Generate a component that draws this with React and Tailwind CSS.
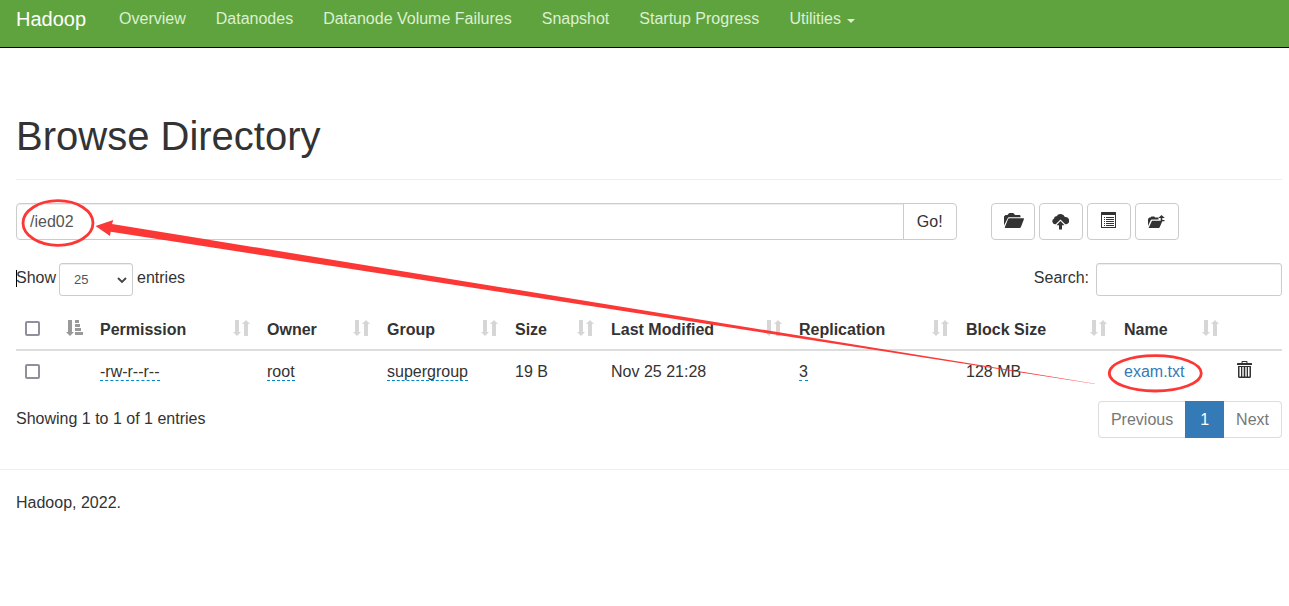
import { useState } from "react";

const navLinks = ["Overview", "Datanodes", "Datanode Volume Failures", "Snapshot", "Startup Progress"];

const columns = [
  { title: "Permission", width: "w-[167px]" },
  { title: "Owner", width: "w-[120px]" },
  { title: "Group", width: "w-[128px]" },
  { title: "Size", width: "w-[96px]" },
  { title: "Last Modified", width: "w-[188px]" },
  { title: "Replication", width: "w-[167px]" },
  { title: "Block Size", width: "w-[158px]" },
  { title: "Name", width: "w-[112px]" }
];

const files = [
  {
    permission: "-rw-r--r--",
    owner: "root",
    group: "supergroup",
    size: "19 B",
    modified: "Nov 25 21:28",
    replication: "3",
    blockSize: "128 MB",
    name: "exam.txt"
  }
];

const checkboxClass =
  "block size-[15px] appearance-none rounded-[2px] border-2 border-[#8f8f9d] bg-white checked:bg-[#337ab7]";

function SortIcon() {
  return (
    <svg className="mb-[2px]" width="17" height="16" viewBox="0 0 17 16" fill="#d6d6d6" aria-hidden="true">
      <path d="M2 0h4v12h2l-4 4-4-4h2z" />
      <path d="M11 16h4V4h2l-4-4-4 4h2z" />
    </svg>
  );
}

function SortAscIcon() {
  return (
    <svg className="mb-[2px]" width="17" height="16" viewBox="0 0 17 16" fill="#999" aria-hidden="true">
      <path d="M2 0h4v12h2l-4 4-4-4h2z" />
      <path d="M9 0h4v3H9zM9 4h5v3H9zM9 8h6v3H9zM9 12h8v3H9z" />
    </svg>
  );
}

function FolderOpenIcon() {
  return (
    <svg className="mb-[2px] ml-[3px]" width="20" height="15" viewBox="0 0 20 15" fill="#333" aria-hidden="true">
      <path d="M0 12.500V3.500L1.500 2H3.500L4.700.5Q5.100 0 5.800 0H8.800Q9.500 0 9.900.5L11 2H15.500Q16.500 2 16.500 3.300V4.300H4.800Q4.100 4.300 3.800 5Z" />
      <path d="M5.200 5.300H19.500Q20.200 5.300 19.900 6.200L16.900 14Q16.500 15 15.600 15H1.300Q.5 15 .9 14L4 6.200Q4.400 5.300 5.200 5.300Z" />
    </svg>
  );
}

function CloudUploadIcon() {
  return (
    <svg width="17" height="17" viewBox="0 0 17 17" fill="#333" aria-hidden="true">
      <path d="M2.900 11.200A2.900 2.900 0 0 1 2.200 5.600A2.100 2.100 0 0 1 4.600 3.200A4.600 4.600 0 0 1 12.900 4.100A3.600 3.600 0 0 1 14.200 11.200H13.300L8.500 6.400L3.700 11.200Z" />
      <path d="M8.500 8L12.500 12.200H10V16.500H7V12.200H4.500Z" />
    </svg>
  );
}

function ListIcon() {
  return (
    <svg className="mb-[3px]" width="15" height="16" viewBox="0 0 15 16" fill="#333" aria-hidden="true">
      <path fillRule="evenodd" d="M.5 0H14.500Q15 0 15 .5V15.500Q15 16 14.500 16H.5Q0 16 0 15.500V.5Q0 0 .5 0ZM1 3V15H14V3Z" />
      <path d="M3 5h1v1H3zM5 5h8v1H5zM3 7h1v1H3zM5 7h8v1H5zM3 9h1v1H3zM5 9h8v1H5zM3 11h1v1H3zM5 11h8v1H5zM3 13h1v1H3zM5 13h8v1H5z" />
    </svg>
  );
}

function FolderMoveIcon() {
  return (
    <svg width="17" height="13" viewBox="0 0 17 13" fill="#333" aria-hidden="true">
      <path d="M0 11V4L1.300 2.500H2.500L3.400 1.400H6.200L7.200 2.500H10.500V4.500H3.600L2.800 5.100Z" />
      <path d="M4 5.800H14.500L11.700 12.300Q11.400 13 10.700 13H.6Z" />
      <path d="M13.500 0L16.800 3H14.300V5H16.500V6.200H12.700V3H10.300Z" />
    </svg>
  );
}

function TrashIcon() {
  return (
    <svg width="15" height="17" viewBox="0 0 15 17" fill="#333" aria-hidden="true">
      <path fillRule="evenodd" d="M4.500 2V1Q4.500 0 5.500 0H9.500Q10.500 0 10.500 1V2H14.500Q15 2 15 2.500V4H0V2.500Q0 2 .5 2ZM5.600 1.100V2H9.400V1.100Z" />
      <path fillRule="evenodd" d="M1 5H14V15.500Q14 17 12.500 17H2.500Q1 17 1 15.500ZM2.500 6V15.500H4V6ZM5.300 6V15.500H6.700V6ZM8.300 6V15.500H9.700V6ZM11 6V15.500H12.500V6Z" />
    </svg>
  );
}

function Annotations() {
  return (
    <svg
      className="pointer-events-none absolute top-0 left-0"
      width="1289"
      height="606"
      viewBox="0 0 1289 606"
      fill="none"
      aria-hidden="true"
    >
      <ellipse cx="58" cy="223" rx="35" ry="22.300" stroke="#fb3836" strokeWidth="2.800" />
      <ellipse cx="1155.300" cy="373.300" rx="46" ry="17.700" stroke="#fb3836" strokeWidth="2.800" />
      <path d="M95.500 226L113.300 220L112 224L1095 383.700V384L110.700 231.800L110 236Z" fill="#fb3836" />
    </svg>
  );
}

const actions = [
  { label: "Create directory", Icon: FolderOpenIcon },
  { label: "Upload files", Icon: CloudUploadIcon },
  { label: "Cut & paste", Icon: ListIcon },
  { label: "Parent directory", Icon: FolderMoveIcon }
];

function Editable({ children }) {
  return (
    <button type="button" className="border-b border-dashed border-b-[#0088cc] leading-[16px]">
      {children}
    </button>
  );
}

export default function App() {
  const [path, setPath] = useState("/ied02");
  const [pageSize, setPageSize] = useState("25");
  const [search, setSearch] = useState("");

  const rows = files.filter((file) => file.name.includes(search));

  return (
    <div className="relative min-h-screen overflow-x-hidden bg-white font-['Liberation_Sans',Arial,sans-serif] text-[16px] leading-[22px] text-[#333]">
      <header className="border-b border-black bg-[#5fa33e]">
        <nav className="flex h-[47px] items-start px-4 pt-2">
          <a href="#" className="mr-[18px] text-[20px] text-white">Hadoop</a>
          <ul className="flex text-[#dcf0d3]">
            {navLinks.map((link) => (
              <li key={link}>
                <a href="#" className="block px-[15px]">{link}</a>
              </li>
            ))}
            <li>
              <button type="button" className="flex items-center gap-[6px] px-[15px]">
                Utilities
                <svg className="mt-[3px]" width="8" height="4" viewBox="0 0 8 4" fill="currentColor" aria-hidden="true">
                  <path d="M0 0h8L4 4z" />
                </svg>
              </button>
            </li>
          </ul>
        </nav>
      </header>

      <main className="pt-[66px]">
        <div className="pr-[7px] pl-4">
          <h1 className="border-b border-[#eee] pb-5 text-[40px] leading-[45px]">Browse Directory</h1>

          <div className="mt-[23px] flex items-center">
            <form className="flex w-[74.3%]" onSubmit={(e) => e.preventDefault()}>
              <input
                type="text"
                aria-label="Directory"
                value={path}
                onChange={(e) => setPath(e.target.value)}
                className="h-[37px] min-w-0 flex-1 rounded-l-[4px] border border-[#ccc] px-[13px] text-[#555] shadow-[inset_0_1px_1px_rgba(0,0,0,0.075)] outline-none"
              />
              <button type="submit" className="-ml-px h-[37px] rounded-r-[4px] border border-[#ccc] px-[13px]">
                Go!
              </button>
            </form>
            <div className="ml-[34px] flex gap-1">
              {actions.map(({ label, Icon }) => (
                <button
                  key={label}
                  type="button"
                  aria-label={label}
                  className="flex h-[37px] w-[44px] items-center justify-center rounded-[4px] border border-[#ccc]"
                >
                  <Icon />
                </button>
              ))}
            </div>
          </div>

          <div className="mt-[23px] flex items-center justify-between">
            <label className="relative flex items-center gap-[3px]">
              <span className="absolute top-[7px] left-0 h-[17px] w-px bg-black" />
              <span className="pb-1">Show</span>
              <span className="relative">
                <select
                  value={pageSize}
                  onChange={(e) => setPageSize(e.target.value)}
                  className="block h-[33px] w-[74px] appearance-none rounded-[3px] border border-[#ccc] bg-white pl-[14px] text-[13px] text-[#555] shadow-[inset_0_1px_1px_rgba(0,0,0,0.075)]"
                >
                  <option>10</option>
                  <option>25</option>
                  <option>50</option>
                  <option>100</option>
                </select>
                <svg
                  className="pointer-events-none absolute top-[14px] right-[6px]"
                  width="10"
                  height="7"
                  viewBox="0 0 10 7"
                  fill="none"
                  stroke="#444"
                  strokeWidth="1.800"
                  aria-hidden="true"
                >
                  <path d="M1 1l4 4 4-4" />
                </svg>
              </span>
              <span className="pb-1 pl-px">entries</span>
            </label>
            <label className="flex items-center gap-[7px]">
              <span className="pb-1">Search:</span>
              <input
                type="search"
                value={search}
                onChange={(e) => setSearch(e.target.value)}
                className="h-[33px] w-[186px] rounded-[3px] border border-[#ccc] px-[11px] text-[13px] shadow-[inset_0_1px_1px_rgba(0,0,0,0.075)] outline-none"
              />
            </label>
          </div>

          <table className="mt-3 w-full table-fixed border-collapse text-left">
            <thead>
              <tr className="h-[42px] border-b-2 border-[#ddd]">
                <th className="w-[75px] px-2">
                  <div className="flex items-center justify-between pl-px">
                    <input type="checkbox" aria-label="Select all" className={checkboxClass} />
                    <SortAscIcon />
                  </div>
                </th>
                {columns.map(({ title, width }) => (
                  <th key={title} className={`${width} px-2`}>
                    <div className="flex items-center justify-between pl-px whitespace-nowrap">
                      <span className="pt-[2px]">{title}</span>
                      <SortIcon />
                    </div>
                  </th>
                ))}
                <th className="w-[55px] px-2" aria-label="Delete" />
              </tr>
            </thead>
            <tbody>
              {rows.map((file) => (
                <tr key={file.name} className="h-[42px] whitespace-nowrap">
                  <td className="px-[9px]">
                    <input type="checkbox" aria-label={`Select ${file.name}`} className={checkboxClass} />
                  </td>
                  <td className="px-[9px]"><Editable>{file.permission}</Editable></td>
                  <td className="px-[9px]"><Editable>{file.owner}</Editable></td>
                  <td className="px-[9px]"><Editable>{file.group}</Editable></td>
                  <td className="px-[9px]">{file.size}</td>
                  <td className="px-[9px]">{file.modified}</td>
                  <td className="px-[9px]"><Editable>{file.replication}</Editable></td>
                  <td className="px-[9px]">{file.blockSize}</td>
                  <td className="px-[9px]">
                    <a href="#" className="text-[#337ab7]">{file.name}</a>
                  </td>
                  <td className="px-[10px]">
                    <button type="button" aria-label={`Delete ${file.name}`} className="block pb-1">
                      <TrashIcon />
                    </button>
                  </td>
                </tr>
              ))}
            </tbody>
          </table>

          <div className="mt-[9px] flex items-start justify-between">
            <p className="pt-[7px]">Showing 1 to 1 of 1 entries</p>
            <div className="flex h-[37px] text-[#777]">
              <button type="button" className="rounded-l-[4px] border border-r-0 border-[#ddd] px-3">Previous</button>
              <button type="button" className="bg-[#337ab7] px-[15px] text-white">1</button>
              <button type="button" className="rounded-r-[4px] border border-l-0 border-[#ddd] px-3">Next</button>
            </div>
          </div>
        </div>
      </main>

      <footer className="mt-[31px] border-t border-[#eee] px-4 pt-[22px]">
        <p>Hadoop, 2022.</p>
      </footer>

      <Annotations />
    </div>
  );
}
